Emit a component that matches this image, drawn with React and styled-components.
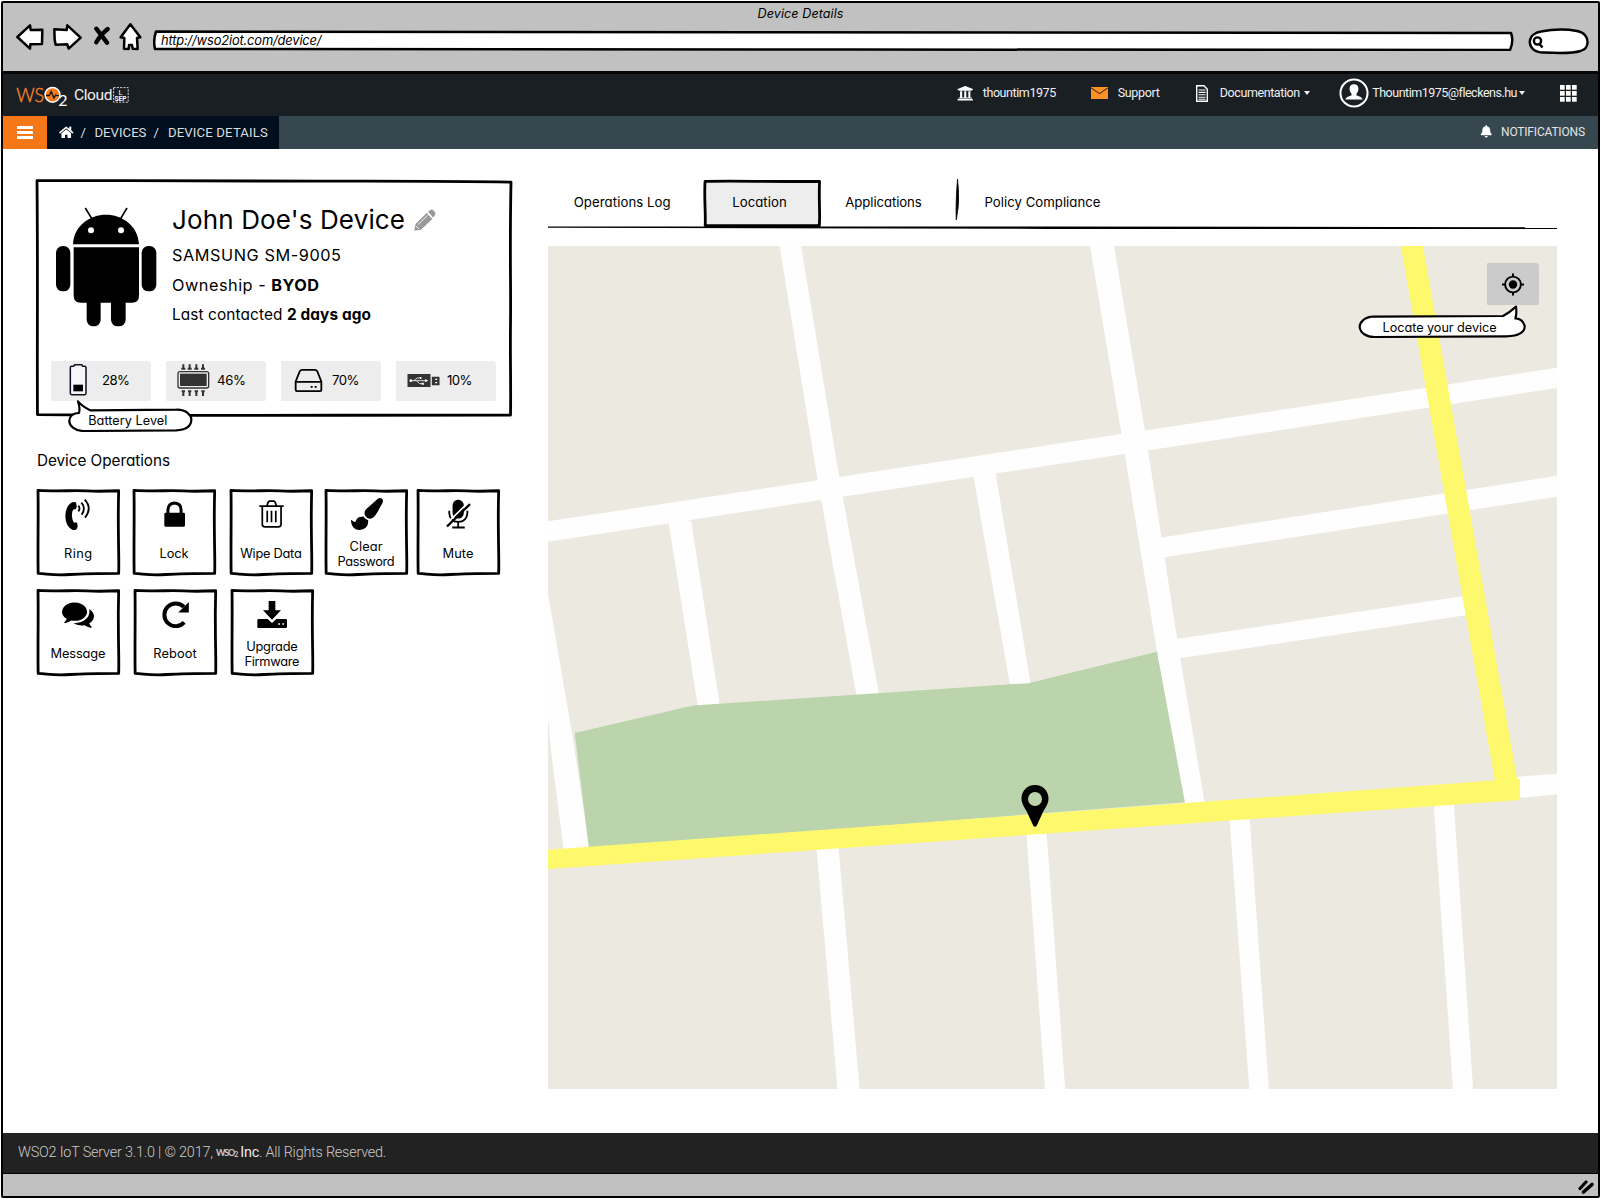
import React, { useLayoutEffect, useRef, useState } from "react";
import styled, { createGlobalStyle, css } from "styled-components";
import { FaHome, FaBell, FaUniversity } from "react-icons/fa";

const GlobalStyle = createGlobalStyle`
  * { box-sizing: border-box; }
  body { margin: 0; background: #fff; }
  svg { display: block; flex: none; }
`;

const sketchFont = css`
  font-family: Inter, Lato, "Liberation Sans", sans-serif;
  font-feature-settings: "cv11" 1, "calt" 0;
  font-weight: 400;
`;

/* ---------- text ---------- */

const FitSpan = styled.span`
  display: inline-block;
  white-space: nowrap;
`;

/* Spreads a label's letters so that it fills the given width. */
function Fit({ w, children }) {
  const ref = useRef(null);
  const [spacing, setSpacing] = useState(0);
  useLayoutEffect(() => {
    const el = ref.current;
    const natural = el.getBoundingClientRect().width;
    setSpacing((w - natural) / Math.max(1, el.textContent.length - 1));
  }, [w]);
  return (
    <FitSpan ref={ref} style={{ letterSpacing: `${spacing}px`, marginRight: `${-spacing}px` }}>
      {children}
    </FitSpan>
  );
}

/* ---------- window ---------- */

const Desktop = styled.div`
  width: 1601px;
  height: 1200px;
  padding: 1px 1px 2px 1px;
  overflow: hidden;
  background: #fff;
`;

const Window = styled.div`
  ${sketchFont}
  display: flex;
  flex-direction: column;
  width: 1599px;
  height: 1197px;
  border: 2px solid #000;
  border-radius: 2px;
  color: #000;
`;

const Chrome = styled.div`
  height: 71px;
  flex: none;
  background: #c1c1c1;
  border-bottom: 3px solid #050505;
`;

const WindowTitle = styled.div`
  height: 20px;
  line-height: 21px;
  font-size: 12.6px;
  font-style: italic;
  text-align: center;
`;

const Toolbar = styled.div`
  display: flex;
  align-items: flex-start;
  padding-left: 13px;
`;

const ToolIcon = styled.svg`
  width: ${(p) => p.$w}px;
  height: 28px;
  margin-right: ${(p) => p.$gap}px;
`;

const UrlField = styled.div`
  position: relative;
  display: flex;
  align-items: center;
  width: 1361px;
  height: 21px;
  margin-top: 7px;
  padding: 0 0 0 8px;
  font-size: 12.9px;
  font-style: italic;
`;

const FieldText = styled.span`
  position: relative;
`;

const FieldShape = styled.svg`
  position: absolute;
  left: 0;
  top: 0;
  width: 1361px;
  height: 21px;
`;

const SearchPill = styled.svg`
  width: 61px;
  height: 27px;
  margin: 5px 0 0 14px;
`;

/* ---------- site header ---------- */

const SiteHeader = styled.header`
  display: flex;
  justify-content: space-between;
  height: 42px;
  flex: none;
  padding: 0 21px 0 12px;
  background: #1a1f23;
  color: #f1f1f1;
  font-family: Roboto, sans-serif;
  font-weight: 400;
`;

const Brand = styled.div`
  display: flex;
  align-items: center;
  gap: 7px;
`;

const Product = styled.div`
  display: flex;
  align-items: center;
  gap: 0;
  font-size: 15.5px;
  line-height: 20px;
  font-weight: 400;
`;

const HeaderMenu = styled.nav`
  display: flex;
  align-items: center;
  padding-bottom: 4px;
  font-size: 12.5px;
`;

const MenuItem = styled.div`
  display: flex;
  align-items: center;
  margin-left: ${(p) => p.$before}px;
  gap: ${(p) => p.$gap}px;
`;

const MenuText = styled.span`
  display: flex;
  align-items: center;
  gap: ${(p) => p.$gap ?? 3}px;
  line-height: 16px;
`;

const Caret = styled.i`
  border: 3.5px solid transparent;
  border-top: 4px solid #f1f1f1;
  border-bottom: 0;
`;

const NavBar = styled.div`
  display: flex;
  justify-content: space-between;
  height: 33px;
  flex: none;
  background: #37474f;
  color: #f0f0f0;
  font-family: Roboto, sans-serif;
  font-weight: 400;
`;

const NavLeft = styled.div`
  display: flex;
`;

const MenuButton = styled.div`
  display: flex;
  flex-direction: column;
  align-items: center;
  justify-content: center;
  gap: 2.6px;
  width: 44px;
  background: #f57718;
`;

const MenuBar = styled.i`
  width: 15.5px;
  height: 2.8px;
  background: #fff;
`;

const Crumbs = styled.div`
  display: flex;
  align-items: center;
  width: 232px;
  padding: 0 0 1px 12px;
  background: #000e1e;
  color: #dedede;
  font-size: 13.2px;
`;

const Crumb = styled.span`
  margin-left: ${(p) => p.$before}px;
`;

const Notifications = styled.div`
  display: flex;
  align-items: center;
  gap: 9px;
  padding: 0 13px 2px 0;
  color: #e2e4e5;
  font-size: 12px;
`;

/* ---------- content ---------- */

const Content = styled.main`
  display: flex;
  align-items: flex-start;
  gap: 37px;
  flex: 1;
  padding: 31px 0 0 34px;
  background: #fff;
`;

const Aside = styled.section`
  width: 474px;
`;

const FrameSvg = styled.svg`
  position: absolute;
  inset: 0;
  width: 100%;
  height: 100%;
  overflow: visible;
  fill: ${(p) => p.$fill};
  stroke: #000;
  stroke-width: 2.8;
  stroke-linejoin: round;
`;

const Card = styled.div`
  position: relative;
  height: 236px;
`;

const CardBody = styled.div`
  position: relative;
  display: flex;
  gap: 15px;
  height: 180.5px;
  padding-left: 18px;
`;

const Android = styled.svg`
  width: 102px;
  height: 120px;
  margin-top: 26.7px;
`;

const DeviceInfo = styled.div`
  padding-top: 24px;
`;

const DeviceName = styled.h1`
  display: flex;
  align-items: center;
  gap: 9px;
  margin: 0 0 4px;
  font-size: 26px;
  line-height: 32px;
  font-weight: 400;
`;

const InfoLine = styled.div`
  height: 30px;
  line-height: 30px;
  font-size: ${(p) => p.$size || 16.3}px;
`;

const Stats = styled.div`
  position: relative;
  display: flex;
  justify-content: space-between;
  padding: 0 15px 0 14px;
`;

const Stat = styled.div`
  display: flex;
  align-items: center;
  width: 100px;
  height: 40px;
  padding: 0 0 1px 3px;
  background: #ededed;
  border-radius: 1px 4px 2px 1px;
  font-size: 13.2px;
`;

const StatIcon = styled.div`
  display: flex;
  justify-content: center;
  width: 48px;
`;

const Bubble = styled.div`
  position: absolute;
  left: ${(p) => p.$x}px;
  top: ${(p) => p.$y}px;
  width: ${(p) => p.$w}px;
  height: ${(p) => p.$h}px;
  padding: ${(p) => p.$pad};
  font-size: 12.7px;
  line-height: 18px;
`;

const BubbleShape = styled.svg`
  position: absolute;
  inset: 0;
  width: 100%;
  height: 100%;
  fill: #fff;
  stroke: #000;
  stroke-width: 6.5;
  stroke-linejoin: round;
`;

const BubbleText = styled.div`
  position: relative;
`;

const SectionTitle = styled.h2`
  margin: 29.5px 0 13.5px;
  font-size: 15.3px;
  line-height: 30px;
  font-weight: 400;
`;

const OpsRow = styled.div`
  display: grid;
  grid-template-columns: ${(p) => p.$columns};
  margin-bottom: 13px;
`;

const Op = styled.div`
  position: relative;
  width: 83px;
  height: 87px;
`;

const OpFace = styled.div`
  position: relative;
  display: flex;
  flex-direction: column;
`;

const OpIcon = styled.div`
  display: flex;
  align-items: center;
  justify-content: center;
  height: 50px;
  padding-right: ${(p) => p.$nudge ?? 1}px;
`;

const OpLabel = styled.div`
  display: flex;
  flex-direction: column;
  align-items: center;
  justify-content: center;
  height: 30px;
  padding-right: 1px;
  font-size: 12.8px;
  line-height: 15.3px;
`;

const Pane = styled.section`
  width: 1009px;
`;

const Tabs = styled.div`
  display: flex;
  align-items: flex-start;
  height: 46px;
  font-size: 13.2px;
`;

const Tab = styled.div`
  position: relative;
  height: ${(p) => (p.$active ? 47 : 44)}px;
  line-height: 44px;
  padding: 0 ${(p) => p.$right}px 0 ${(p) => p.$left}px;
`;

const TabText = styled.span`
  position: relative;
`;

const TabDivider = styled.svg`
  width: 4px;
  height: 41px;
  margin-top: -1px;
`;

const Rule = styled.svg`
  width: 1009px;
  height: 4px;
`;

const MapArea = styled.div`
  position: relative;
  height: 843px;
  margin-top: 16px;
`;

const MapDrawing = styled.svg`
  width: 1009px;
  height: 843px;
`;

const LocateButton = styled.div`
  position: absolute;
  top: 17px;
  right: 18px;
  display: flex;
  align-items: center;
  justify-content: center;
  width: 52px;
  height: 42px;
  background: #cbcbcb;
  border-radius: 1px 3px 2px 1px;
`;

const Pin = styled.svg`
  position: absolute;
  left: 473px;
  top: 539px;
  width: 28px;
  height: 42px;
`;

const Footer = styled.footer`
  display: flex;
  align-items: center;
  height: 40px;
  flex: none;
  padding: 0 0 2px 15px;
  background: #222;
  color: #cccccc;
  font-family: Roboto, sans-serif;
  font-size: 14.4px;
  font-weight: 300;
  white-space: pre;
`;

const FooterLogo = styled.span`
  display: flex;
  align-items: baseline;
  margin: 0 3px;
  font-family: Lato, sans-serif;
  font-size: 9px;
  font-weight: 700;
  letter-spacing: -1.1px;
`;

const FooterSub = styled.small`
  font-size: 7px;
  position: relative;
  top: 1px;
`;

const Company = styled.b`
  color: #ececec;
  font-weight: 400;
`;

const StatusBar = styled.div`
  display: flex;
  justify-content: flex-end;
  height: 23px;
  flex: none;
  padding: 6px 3px 0 0;
  background: #c1c1c1;
  border-top: 1.5px solid #000;
`;

/* ---------- drawings ---------- */

const TILE_PATH =
  "M1.2 1.600 C25 2.800 45 1.400 60 2.200 S85 2.600 98.400 2 C97.600 30 98 45 98.200 60 S98.800 85 98.400 97 C80 97 60 97 40 98.300 S15 97.800 1.400 97 C.8 70 1.800 30 1.200 1.600Z";
const CARD_PATH =
  "M0 .3 C20 .1 35 .6 60 .5 S90 .5 100 .9 C99.700 30 100 45 99.900 60 S100 85 99.900 99.600 C80 99.900 50 99.500 30 99.700 S10 99.400 .1 99.400 C0 70 .2 40 0 .3Z";
const TAB_PATH =
  "M.9 3 C20 1.600 50 3.400 99.200 3.200 C98.400 40 99.800 70 99 97 C70 97 30 97 1 97 C1.600 70 0 40 .9 3Z";

const Frame = ({ d, fill = "#fff" }) => (
  <FrameSvg viewBox="0 0 100 100" preserveAspectRatio="none" $fill={fill}>
    <path d={d} vectorEffect="non-scaling-stroke" />
  </FrameSvg>
);

const BrandLogo = () => (
  <svg width="52" height="27" viewBox="15 82 52 27">
    <text x="16.200" y="102.300" fontFamily="Lato, sans-serif" fontWeight="300" fontSize="20.500" fill="#f58a3c" stroke="#f27a21" strokeWidth=".5" textLength="28" lengthAdjust="spacingAndGlyphs">WS</text>
    <circle cx="52.500" cy="94.800" r="7.400" fill="#f27a21" stroke="#fff" strokeWidth="1.500" />
    <path d="M46 95.500h3.200l2-4 2.700 6.600 1.900-3.200 1.300.8h2" fill="none" stroke="#151515" strokeWidth="1.300" />
    <text x="58.300" y="106.200" fontFamily="Lato, sans-serif" fontSize="16" fill="#fff">2</text>
  </svg>
);

const SeparatorGlyph = () => (
  <svg width="16" height="16" viewBox="0 0 16 16">
    <rect x=".6" y=".6" width="14.600" height="14.600" fill="none" stroke="#ddd" strokeDasharray="2 1.300" />
    <text x="5.400" y="7.600" fontFamily="Roboto, sans-serif" fontSize="7.500" fill="#fff">L</text>
    <text x="1.600" y="13.900" fontFamily="Roboto, sans-serif" fontWeight="700" fontSize="6.500" fill="#fff">SEP</text>
  </svg>
);

const Mail = () => (
  <svg width="17" height="12" viewBox="0 0 17 12">
    <path fill="#fc9226" d="M0 0h17v12H0z" />
    <path d="M.3 1l8.200 5.600L16.700 1" fill="none" stroke="#5b3410" strokeWidth="1.100" />
  </svg>
);

const Doc = () => (
  <svg width="12" height="17" viewBox="0 0 12 17">
    <path d="M.7.700h7.300l3.300 3.500v12.100H.700z" fill="none" stroke="#fff" strokeWidth="1.400" />
    <path d="M2.500 5h7M2.500 7.400h7M2.500 9.800h7M2.500 12.200h7M2.500 14.300h7" stroke="#fff" strokeWidth="1.100" />
  </svg>
);

const Avatar = () => (
  <svg width="30" height="30" viewBox="0 0 31 31">
    <circle cx="15.500" cy="15.500" r="14" fill="none" stroke="#fff" strokeWidth="2.100" />
    <path fill="#fff" d="M15.500 6.500c3 0 4.700 2 4.600 4.900-.1 2.200-1 3.700-2.100 4.800v1.600c2.600 1.100 5.800 1.700 6.300 4.400H6.700c.5-2.700 3.700-3.300 6.300-4.400v-1.600c-1.100-1.100-2-2.600-2.100-4.800-.1-2.900 1.600-4.900 4.600-4.900z" />
  </svg>
);

const AppsGrid = () => (
  <svg width="17" height="17" viewBox="0 0 17 17" fill="#fff">
    {[0, 6, 12].map((y) => [0, 6, 12].map((x) => <rect key={`${x}-${y}`} x={x} y={y} width="4.700" height="4.700" />))}
  </svg>
);

const Pencil = () => (
  <svg width="22" height="22" viewBox="1153 116 64 66" fill="#999">
    <path d="M1190 128l17 18-34 32-20 3 3-19zM1194 124l7-5q4-3 8 0l6 7q3 4 0 8l-5 8z" />
    <path d="M1193 135l-29 28M1157 166l10 10" stroke="#fff" strokeWidth="2.500" />
  </svg>
);

const Battery = () => (
  <svg width="18" height="32" viewBox="118 586 54 96">
    <path d="M122 596q0-3 4-3h6l3-5h21l3 5h6q4 0 4 4v77q0 4-4 4h-39q-4 0-4-4z" fill="#f6f6f6" stroke="#0a1220" strokeWidth="4.500" />
    <path d="M131 648h29v20h-29z" />
  </svg>
);

const Chip = () => (
  <svg width="33" height="34" viewBox="437 583 99 100" fill="#333">
    <rect x="440" y="608" width="92" height="49" rx="6" fill="#ededed" stroke="#333" strokeWidth="4" />
    <rect x="446" y="614" width="80" height="37" />
    {[456, 475, 495, 515].map((x) => (
      <path key={x} d={`M${x - 3} 586h6v10h3v6h-12v-6h3zM${x - 5} 664h10v6h-2v11h-6v-11h-2z`} />
    ))}
  </svg>
);

const Drive = () => (
  <svg width="29" height="25" viewBox="788 597 87 74" fill="none" stroke="#000" strokeWidth="5.500">
    <path d="M793 637l12-30q2-5 8-5h37q6 0 8 5l12 30v25q0 4-4 4h-69q-4 0-4-4zM793 638h77" strokeLinejoin="round" />
    <path d="M838 653h6M850 653h6" />
  </svg>
);

const Usb = () => (
  <svg width="33" height="13" viewBox="1130 612 98 39">
    <path d="M1131 612h69v39h-69zM1204 620h23v26h-23z" fill="#333" />
    <path d="M1140 632h45M1150 632l10-8h9M1158 632l9 9h9" fill="none" stroke="#fff" strokeWidth="2.500" />
    <path d="M1137 632a4 4 0 108 0 4 4 0 10-8 0M1184 627l9 5-9 5zM1168 621h5v6h-5zM1174 638h6v6h-6zM1214 626h6v4h-6zM1214 636h6v4h-6z" fill="#fff" />
  </svg>
);

const RingIcon = () => (
  <svg width="26" height="32" viewBox="106 176 78 96">
    <path d="M128 189l9-1q4 3 4 13 0 7-3 8l-8 2q-4 8-3 21 1 11 6 18l7-1q4 2 4 10t-5 12l-8 2q-23-11-24-41 0-33 21-43z" />
    <path d="M146 199q7 8 0 17M155 190q15 16 1 36M165 181q24 25 1 54" fill="none" stroke="#000" strokeWidth="5.400" />
  </svg>
);

const LockIcon = () => (
  <svg width="21" height="26" viewBox="401 182 64 77">
    <path d="M402 221q0-4 4-4h55q4 0 4 4v34q0 4-4 4h-55q-4 0-4-4z" />
    <path d="M413 219v-11q1-20 20-21 20 1 20 21v11" fill="none" stroke="#000" strokeWidth="9" />
  </svg>
);

const TrashIcon = () => (
  <svg width="25" height="28" viewBox="685 182 76 84" fill="none" stroke="#000" strokeWidth="5.200">
    <path d="M686 200h74M709 199l4-11q1-3 4-3h13q3 0 4 3l4 11M695 201v54q0 8 8 8h41q8 0 8-8v-54M710 214v35M723 214v35M736 214v35" />
  </svg>
);

const BrushIcon = () => (
  <svg width="32" height="32" viewBox="0 0 1792 1792">
    <path d="M1615 0q70 0 122.500 46.500t52.500 116.500q0 63-45 151-332 629-465 752-97 91-218 91-126 0-216.500-92.500t-90.500-219.500q0-128 92-212l638-579q59-54 130-54zm-909 1034q39 76 106.500 130t150.500 76l1 71q4 213-129.500 347t-348.500 134q-123 0-218-46.500t-152.500-127.500-86.500-183-29-220q7 5 41 30t62 44.500 59 36.500 46 17q41 0 55-37 25-66 57.500-112.500t69.500-76 88-47.500 103-25.500 125-10.500z" />
  </svg>
);

const MuteIcon = () => (
  <svg width="25" height="30" viewBox="1247 176 76 90">
    <rect x="1267" y="178" width="34" height="57" rx="16" />
    <path d="M1257 211v8q2 25 27 26 26-1 28-26v-8M1284 244v17M1266 262h38" fill="none" stroke="#000" strokeWidth="5.500" />
    <path d="M1246 253l72-70" stroke="#fff" strokeWidth="5" />
    <path d="M1250 259l70-68" stroke="#000" strokeWidth="7" />
  </svg>
);

const MessageIcon = () => (
  <svg width="32" height="32" viewBox="0 0 1792 1792">
    <path d="M1408 768q0 139-94 257t-256.500 186.500-353.500 68.500q-86 0-176-16-124 88-278 128-36 9-86 16h-3q-11 0-20.500-8t-11.500-21q-1-3-1-6.500t.5-6.500 2-6l2.500-5 3.500-5.500 4-5 4.500-5 4-4.500q5-6 23-25t26-29.500 22.500-29 25-38.500 20.500-44q-124-72-195-177t-71-224q0-139 94-257t256.500-186.500 353.500-68.500 353.500 68.500 256.500 186.500 94 257zm384 256q0 120-71 224.500t-195 176.500q10 24 20.500 44t25 38.500 22.500 29 26 29.500 23 25q1 1 4 4.500t4.500 5 4 5 3.500 5.500l2.500 5 2 6 .5 6.500-1 6.500q-3 14-13 22t-22 7q-50-7-86-16-154-40-278-128-90 16-176 16-271 0-472-132 58 4 88 4 161 0 309-45t264-129q125-92 192-212t67-254q0-77-23-152 129 71 204 178t75 230z" />
  </svg>
);

const RebootIcon = () => (
  <svg width="28" height="27" viewBox="393 482 84 82">
    <path d="M463 547a34.500 34.500 0 11-1-47" fill="none" stroke="#000" strokeWidth="12" />
    <path d="M477 485v32h-32z" />
  </svg>
);

const UpgradeIcon = () => (
  <svg width="30" height="30" viewBox="681 471 90 90">
    <path d="M716 477h20v28h17l-27 28-27-28h17z" />
    <path d="M682 534q0-3 3-3h28l13 12 13-12h28q4 0 4 3v21q0 3-4 3h-82q-3 0-3-3z" />
    <path d="M745 546h5M757 546h5" stroke="#fff" strokeWidth="5" />
  </svg>
);

const TargetIcon = () => (
  <svg width="22" height="23" viewBox="0 0 22 23">
    <circle cx="11" cy="11.500" r="7.900" fill="none" stroke="#000" strokeWidth="1.900" />
    <circle cx="11" cy="11.500" r="4.200" />
    <path d="M11 .5v3.500M11 19v3.500M0 11.500h3.500M18.500 11.500H22" stroke="#000" strokeWidth="2" />
  </svg>
);

const white = "#fefefe";
const yellow = "#fef96c";

const ROADS = [
  "368,11 401,11 460,435 521,829 486,829 426,435",
  "845,11 882,11 930,350 982,750 1022,1030 991,1030 948,750 893,350",
  "12,513 1563,233 1563,270 12,550",
  "197,512 232,512 276,848 242,848",
  "665,425 700,425 754,810 722,810",
  "940,545 1563,430 1563,468 945,581",
  "970,729 1425,648 1425,684 975,764",
  "12,645 49,900 76,1112 36,1112 17,935 12,870",
  "1500,979 1563,973 1563,1011 1500,1018",
  "424,1100 458,1100 491,1548 457,1548",
  "747,1075 778,1075 807,1548 776,1548",
  "1059,1045 1090,1045 1120,1548 1090,1548",
  "1373,1020 1404,1020 1434,1548 1403,1548",
];

const CityMap = () => (
  <MapDrawing viewBox="12 11 1551 1537" preserveAspectRatio="none">
    <rect x="12" y="11" width="1551" height="1537" fill="#ece9e1" />
    {ROADS.map((points) => (
      <polygon key={points} points={points} fill={white} />
    ))}
    <polygon points="53,899 235,849 750,808 948,751 991,1025 75,1110" fill="#bbd4ac" />
    <polygon points="12,1112 1506,982 1506,1021 12,1147" fill={yellow} />
    <polygon points="1323,11 1357,11 1502,985 1468,990" fill={yellow} />
  </MapDrawing>
);

/* ---------- page ---------- */

const STATS = [
  { icon: <Battery />, value: "28%", w: 28 },
  { icon: <Chip />, value: "46%", w: 29 },
  { icon: <Drive />, value: "70%", w: 27.5 },
  { icon: <Usb />, value: "10%", w: 25.5 },
];

const OPS = [
  {
    columns: "96px 97px 95px 92px 83px",
    items: [
      { icon: <RingIcon />, lines: [["Ring", 28]] },
      { icon: <LockIcon />, lines: [["Lock", 29]] },
      { icon: <TrashIcon />, lines: [["Wipe Data", 61.5]] },
      { icon: <BrushIcon />, nudge: 0, lines: [["Clear", 33], ["Password", 57]] },
      { icon: <MuteIcon />, nudge: 0, lines: [["Mute", 31]] },
    ],
  },
  {
    columns: "97px 97px 83px",
    items: [
      { icon: <MessageIcon />, lines: [["Message", 55]] },
      { icon: <RebootIcon />, nudge: 2, lines: [["Reboot", 43.5]] },
      { icon: <UpgradeIcon />, nudge: 2, lines: [["Upgrade", 51.5], ["Firmware", 55]] },
    ],
  },
];

export default function App() {
  return (
    <Desktop>
      <GlobalStyle />
      <Window>
        <Chrome>
          <WindowTitle><Fit w={86}>Device Details</Fit></WindowTitle>
          <Toolbar>
            <ToolIcon $w={28} $gap={9} viewBox="47 69 84 84" fill="#fff" stroke="#000" strokeWidth="7.500" strokeLinejoin="round">
              <path d="M51 111l38-35 2 14 35-1-1 43-35 1-1 13z" />
            </ToolIcon>
            <ToolIcon $w={29} $gap={12} viewBox="158 69 87 84" fill="#fff" stroke="#000" strokeWidth="7.500" strokeLinejoin="round">
              <path d="M162 88l37 2 2-14 40 37-36 33-4-13-35 1-3-15z" />
            </ToolIcon>
            <ToolIcon $w={16} $gap={9} viewBox="282 69 48 84" fill="none" stroke="#000" strokeWidth="13" strokeLinecap="round">
              <path d="M289 86l32 42M323 87q-22 18-34 40" />
            </ToolIcon>
            <ToolIcon $w={23} $gap={11} viewBox="356 69 69 84" fill="#fff" stroke="#000" strokeWidth="7.500" strokeLinejoin="round">
              <path d="M390 73l30 39-10 2 2 33-15-1-2-11h-9l-1 12-14-1 1-32-11-2z" />
            </ToolIcon>
            <UrlField>
              <FieldShape viewBox="0 0 1361 21">
                <path d="M3 1.500L600 2.300 1358 3q3 8-1 17L700 19.500 2 19Q0 10 3 1.500Z" fill="#fff" stroke="#000" strokeWidth="2.500" strokeLinejoin="round" />
              </FieldShape>
              <FieldText><Fit w={160.5}>http://wso2iot.com/device/</Fit></FieldText>
            </UrlField>
            <SearchPill viewBox="0 0 61 27" fill="#fff" stroke="#000" strokeWidth="2.400">
              <path d="M13 3.500C26 1 41 1.500 49 3c8 1.500 11 7 10.500 12-.5 5-3 6.500-7 8-8 2.600-27 2-37 1.500C6 24.500 1.500 19 1.800 13.500 2 8 7 4.500 13 3.500z" />
              <circle cx="9.500" cy="13" r="3.600" strokeWidth="2.400" />
              <path d="M11.500 16l3 3.500" strokeWidth="2.600" />
            </SearchPill>
          </Toolbar>
        </Chrome>

        <SiteHeader>
          <Brand>
            <BrandLogo />
            <Product><Fit w={38.5}>Cloud</Fit><SeparatorGlyph /></Product>
          </Brand>
          <HeaderMenu>
            <MenuItem $gap={9.5} $before={0}>
              <FaUniversity size={16.5} color="#fff" />
              <MenuText><Fit w={73.5}>thountim1975</Fit></MenuText>
            </MenuItem>
            <MenuItem $gap={9.5} $before={35}>
              <Mail />
              <MenuText><Fit w={42}>Support</Fit></MenuText>
            </MenuItem>
            <MenuItem $gap={11.5} $before={36.5}>
              <Doc />
              <MenuText $gap={4}><Fit w={80.5}>Documentation</Fit><Caret /></MenuText>
            </MenuItem>
            <MenuItem $gap={3} $before={29}>
              <Avatar />
              <MenuText $gap={1.5}><Fit w={145}>Thountim1975@fleckens.hu</Fit><Caret /></MenuText>
            </MenuItem>
            <MenuItem $gap={0} $before={35}><AppsGrid /></MenuItem>
          </HeaderMenu>
        </SiteHeader>

        <NavBar>
          <NavLeft>
            <MenuButton><MenuBar /><MenuBar /><MenuBar /></MenuButton>
            <Crumbs>
              <FaHome size={14.5} color="#fff" />
              <Crumb $before={7}>/</Crumb>
              <Crumb $before={8.5}><Fit w={52}>DEVICES</Fit></Crumb>
              <Crumb $before={7}>/</Crumb>
              <Crumb $before={9}><Fit w={100}>DEVICE DETAILS</Fit></Crumb>
            </Crumbs>
          </NavLeft>
          <Notifications>
            <FaBell size={12.5} color="#fff" />
            <Fit w={84}>NOTIFICATIONS</Fit>
          </Notifications>
        </NavBar>

        <Content>
          <Aside>
            <Card>
              <Frame d={CARD_PATH} />
              <CardBody>
                <Android viewBox="75 110 306 360">
                  <path d="M129 222C132 165 180 133 228 133S324 165 327 222ZM131 231H327V376Q327 397 306 397H152Q131 397 131 376Z" />
                  <rect x="78" y="227" width="43" height="136" rx="20" />
                  <rect x="335" y="227" width="44" height="136" rx="20" />
                  <rect x="170" y="370" width="42" height="98" rx="20" />
                  <rect x="243" y="370" width="44" height="98" rx="20" />
                  <path d="M166 113l21 35M291 113l-21 35" stroke="#000" strokeWidth="5" />
                  <circle cx="183" cy="180" r="9" fill="#fff" />
                  <circle cx="273" cy="180" r="9" fill="#fff" />
                </Android>
                <DeviceInfo>
                  <DeviceName><Fit w={233}>John Doe's Device</Fit><Pencil /></DeviceName>
                  <InfoLine><Fit w={169}>SAMSUNG SM-9005</Fit></InfoLine>
                  <InfoLine><Fit w={147}>Owneship - <b>BYOD</b></Fit></InfoLine>
                  <InfoLine $size={15.4}><Fit w={199}>Last contacted <b>2 days ago</b></Fit></InfoLine>
                </DeviceInfo>
              </CardBody>
              <Stats>
                {STATS.map((s) => (
                  <Stat key={s.value}>
                    <StatIcon>{s.icon}</StatIcon>
                    <Fit w={s.w}>{s.value}</Fit>
                  </Stat>
                ))}
              </Stats>
              <Bubble $x={31.3} $y={219.5} $w={125.3} $h={32.7} $pad="12px 0 0 20px">
                <BubbleShape viewBox="115 688 376 98">
                  <path d="M148 727C151 715 149 703 145 692C155 704 168 712 182 719L440 717C470 716 487 735 485 750C483 768 465 778 440 779L160 781C135 780 118 765 119 750C119 737 130 727 148 727Z" />
                </BubbleShape>
                <BubbleText><Fit w={79}>Battery Level</Fit></BubbleText>
              </Bubble>
            </Card>

            <SectionTitle><Fit w={133}>Device Operations</Fit></SectionTitle>
            {OPS.map((row) => (
              <OpsRow key={row.columns} $columns={row.columns}>
                {row.items.map((op) => (
                  <Op key={op.lines[0][0]}>
                    <Frame d={TILE_PATH} />
                    <OpFace>
                      <OpIcon $nudge={op.nudge}>{op.icon}</OpIcon>
                      <OpLabel>
                        {op.lines.map(([text, w]) => <Fit key={text} w={w}>{text}</Fit>)}
                      </OpLabel>
                    </OpFace>
                  </Op>
                ))}
              </OpsRow>
            ))}
          </Aside>

          <Pane>
            <Tabs>
              <Tab $left={25.7} $right={33.3}><Fit w={97}>Operations Log</Fit></Tab>
              <Tab $active $left={28.2} $right={33.8}>
                <Frame d={TAB_PATH} fill="#ededed" />
                <TabText><Fit w={54.5}>Location</Fit></TabText>
              </Tab>
              <Tab $left={24.8} $right={33.2}><Fit w={76.5}>Applications</Fit></Tab>
              <TabDivider viewBox="0 0 4 41">
                <path d="M2.500 0Q4.500 15 3.200 28L1.300 41Q.5 25 2.500 0Z" stroke="#000" strokeWidth=".8" />
              </TabDivider>
              <Tab $left={25.5} $right={0}><Fit w={116}>Policy Compliance</Fit></Tab>
            </Tabs>
            <Rule viewBox="0 0 1009 4">
              <path d="M0 .4L500 .5 1009 1.300V3L500 2.900 0 1.700Z" />
            </Rule>
            <MapArea>
              <CityMap />
              <Pin viewBox="0 0 28 42">
                <path fillRule="evenodd" d="M14 0C22 0 27.500 6 27.500 13.500 27.500 19 24 23 22 27L15.800 40.500Q14 43 12.200 40.500L6 27C4 23 .5 19 .5 13.500.5 6 6 0 14 0zM14 7a7 7 0 100 14 7 7 0 100-14z" />
              </Pin>
              <LocateButton><TargetIcon /></LocateButton>
              <Bubble $x={810.3} $y={59.3} $w={168.7} $h={34} $pad="13.5px 0 0 24.3px">
                <BubbleShape viewBox="55 196 506 102">
                  <path d="M527 236C532 222 530 212 529 201C517 212 505 221 490 229L100 231C75 232 60 247 60 262C62 280 80 292 105 292L500 290C540 289 556 275 555 260C552 245 542 237 527 236Z" />
                </BubbleShape>
                <BubbleText><Fit w={114}>Locate your device</Fit></BubbleText>
              </Bubble>
            </MapArea>
          </Pane>
        </Content>

        <Footer>
          <Fit w={195}>WSO2 IoT Server 3.1.0 | © 2017,</Fit>
          <FooterLogo>WSO<FooterSub>2</FooterSub></FooterLogo>
          <Fit w={146}><Company>Inc</Company>. All Rights Reserved.</Fit>
        </Footer>
        <StatusBar>
          <svg width="18" height="15" viewBox="0 0 18 15" fill="none" stroke="#000" strokeLinecap="round">
            <path d="M3 8.500L9 2" strokeWidth="3.200" />
            <path d="M6.500 12L15 4.500" strokeWidth="3.600" />
          </svg>
        </StatusBar>
      </Window>
    </Desktop>
  );
}
